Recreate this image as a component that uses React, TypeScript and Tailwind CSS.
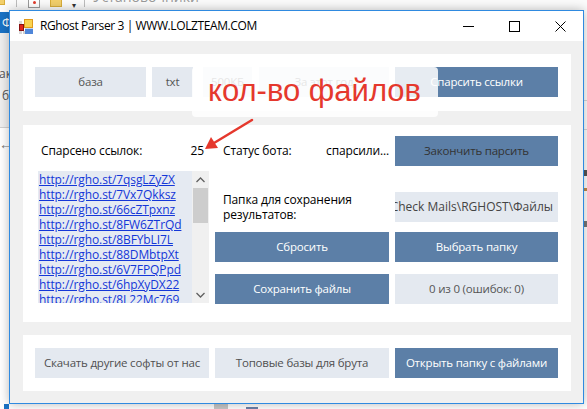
import React from "react";

const links = [
  "http://rgho.st/7qsgLZyZX",
  "http://rgho.st/7Vx7Qkksz",
  "http://rgho.st/66cZTpxnz",
  "http://rgho.st/8FW6ZTrQd",
  "http://rgho.st/8BFYbLI7L",
  "http://rgho.st/88DMbtpXt",
  "http://rgho.st/6V7FPQPpd",
  "http://rgho.st/6hpXyDX22",
  "http://rgho.st/8L22Mc769",
  "http://rgho.st/7kQzP2xLm",
];

function AppIcon() {
  return (
    <svg width="14" height="15" viewBox="0 0 14 15">
      <rect x="0" y="2" width="3" height="3" fill="#d8d8d8" />
      <rect x="0" y="12" width="3" height="3" fill="#d8d8d8" />
      <rect x="4" y="12" width="2" height="3" fill="#d0d0d0" />
      <rect x="0.5" y="5.5" width="4" height="6" fill="#e2251b" stroke="#8a1010" />
      <rect x="5.5" y="0.5" width="8" height="8" fill="#f9d34f" stroke="#e09a1a" />
      <rect x="6" y="10" width="8" height="5" fill="#4f86d9" />
      <rect x="6" y="9" width="8" height="1" fill="#c9d8ee" />
    </svg>
  );
}

function Chevron({ up }: { up?: boolean }) {
  return (
    <svg width="9" height="6" viewBox="0 0 9 6">
      <path
        d={up ? "M0.5 5 L4.5 1 L8.5 5" : "M0.5 1 L4.5 5 L8.5 1"}
        fill="none"
        stroke="#606060"
        strokeWidth="1.3"
      />
    </svg>
  );
}

export default function App() {
  const blue = "bg-[#5c7fa7] text-[11.5px] tracking-[-0.2px]";
  const light = "bg-[#e4e9f0] text-[11.5px] tracking-[-0.2px]";
  return (
    <div className="relative w-[587px] h-[409px] overflow-hidden bg-white font-['Open_Sans',sans-serif] text-[12px]">
      {/* desktop background */}
      <div className="flex flex-col h-full">
        <div className="h-[10px] flex items-start overflow-hidden bg-[#fbfbfb] text-[#9a9a9a]">
          <div className="w-[5px] h-[5px] bg-[#f2cf6b] border-r border-b border-[#d8ad3a]" />
          <div className="ml-[11px] w-px h-[7px] bg-[#bdbdbd]" />
          <div className="ml-[11px] w-[12px] h-[8px] border border-[#9a9a9a] border-t-0 bg-white flex justify-center">
            <div className="w-[3px] h-[3px] rounded-full bg-[#e03a2a] mt-[1px]" />
          </div>
          <div className="ml-[10px] w-[12px] h-[7px] bg-[#f2cf6b] border border-t-0 border-[#d8ad3a]" />
          <div className="ml-[10px] mt-[1px] text-[8px] leading-[8px] text-[#333]">▾</div>
          <div className="ml-[8px] w-px h-[7px] bg-[#bdbdbd]" />
          <div className="ml-[8px] -mt-[11px] text-[14px] leading-[16px] whitespace-nowrap">Установочники</div>
        </div>
        <div className="flex-1 flex">
          <div className="w-[9px] flex flex-col">
            <div className="h-[2px]" />
            <div className="h-[21px] bg-[#1a73c6] text-white text-[12px] leading-[21px] overflow-hidden whitespace-nowrap pl-[2px]">Фа</div>
            <div className="h-[94px] bg-[#efefef] text-[#555] overflow-hidden whitespace-nowrap text-[12px]">
              <div className="mt-[34px] leading-[14px] -ml-[1px]">ак</div>
              <div className="mt-[8px] leading-[14px] pl-[2px]">б</div>
            </div>
            <div className="h-px bg-[#d0d0d0]" />
            <div className="mt-[9px] text-[#777] text-[14px] leading-[14px] overflow-hidden -ml-[1px]">←</div>
            <div className="flex-1" />
            <div className="h-[5px] flex">
              <div className="ml-[4px] w-[5px] bg-[#1a73c6]" />
            </div>
          </div>
          <div className="flex-1 flex flex-col">
            <div className="flex-1" />
            <div className="h-[5px] flex">
              <div className="ml-[205px] w-[14px] bg-[#c6c6c6]" />
              <div className="ml-[18px] w-[12px] h-[2px] mt-[3px] bg-[#6a7fa8]" />
            </div>
          </div>
          <div className="w-[3px] flex flex-col">
            <div className="h-[90px]" />
            <div className="h-px bg-[#d8d8d8]" />
            <div className="h-[28px]" />
            <div className="h-px bg-[#d8d8d8]" />
            <div className="h-[40px]" />
            <div className="h-[6px] bg-[#555]" />
            <div className="h-[12px]" />
            <div className="h-[3px] bg-[#c08a4a]" />
            <div className="h-[30px]" />
            <div className="h-[6px] bg-[#777]" />
          </div>
        </div>
      </div>

      {/* window */}
      <div className="absolute left-[9px] top-[10px] w-[575px] h-[394px] border border-[#2f8ae0] bg-[#f0f0f0] flex flex-col shadow-[0_0_10px_rgba(0,0,0,0.28)]">
        <div className="h-[30px] bg-white flex items-center shrink-0">
          <div className="ml-[9px] mt-[1px]">
            <AppIcon />
          </div>
          <div className="ml-[7px] text-[12px] text-black whitespace-nowrap tracking-[-0.4px]">
            RGhost Parser 3 | WWW.LOLZTEAM.COM
          </div>
          <div className="flex-1" />
          <div className="w-[46px] h-full flex items-center justify-center">
            <div className="w-[11px] h-px bg-black" />
          </div>
          <div className="w-[46px] h-full flex items-center justify-center">
            <div className="w-[11px] h-[11px] border border-black" />
          </div>
          <div className="w-[46px] h-full flex items-center justify-center">
            <svg width="11" height="11" viewBox="0 0 11 11">
              <path d="M0.5 0.5 L10.5 10.5 M10.5 0.5 L0.5 10.5" stroke="#000" strokeWidth="1" />
            </svg>
          </div>
        </div>

        <div className="flex-1 flex flex-col pt-[13px] pl-[13px] pr-[12px]">
          {/* panel 1 */}
          <div className="h-[57px] bg-white pt-[13px] pl-[12px] flex items-start">
            <div className={`w-[111px] h-[30px] ${light} flex items-center justify-center text-[#555]`}>база</div>
            <div className={`ml-[6px] w-[41px] h-[30px] ${light} flex items-center justify-center text-[#555]`}>txt</div>
            <div className={`ml-[10px] w-[49px] h-[30px] ${light} flex items-center justify-center text-[#555]`}>500КБ</div>
            <div className={`ml-[7px] w-[130px] h-[30px] ${light} flex items-center justify-center text-[#555]`}>За этот год</div>
            <div className={`ml-[6px] w-[163px] h-[30px] ${blue} flex items-center justify-center text-white`}>Спарсить ссылки</div>
          </div>

          {/* panel 2 */}
          <div className="mt-[14px] h-[197px] bg-white pt-[11px] pl-[15px] flex items-start gap-[6px]">
            <div className="w-[171px] flex flex-col">
              <div className="h-[30px] flex items-center justify-between pl-[3px] pr-[5px] text-black tracking-[-0.15px]">
                <span>Спарсено ссылок:</span>
                <span>25</span>
              </div>
              <div className="mt-[5px] h-[132px] flex">
                <div className="w-[154px] bg-[#e5eaf2] overflow-hidden pl-[1px] pt-[1px]">
                  {links.map((l) => (
                    <div key={l} className="h-[15px] leading-[15px] text-[#1437d8] underline whitespace-nowrap text-[12px] tracking-[-0.1px]">
                      {l}
                    </div>
                  ))}
                </div>
                <div className="w-[17px] bg-[#f0f0f0] flex flex-col">
                  <div className="h-[17px] flex items-center justify-center">
                    <Chevron up />
                  </div>
                  <div className="flex-1 px-[1px]">
                    <div className="h-[35px] bg-[#cdcdcd]" />
                  </div>
                  <div className="h-[17px] flex items-center justify-center">
                    <Chevron />
                  </div>
                </div>
              </div>
            </div>

            <div className="w-[343px] flex flex-col">
              <div className="h-[30px] flex">
                <div className="w-[174px] flex items-center justify-between pl-[8px] text-black tracking-[-0.15px]">
                  <span>Статус бота:</span>
                  <span>спарсили...</span>
                </div>
                <div className={`ml-[6px] w-[163px] ${blue} flex items-center justify-center text-[#333]`}>Закончить парсить</div>
              </div>
              <div className="mt-[26px] h-[30px] flex">
                <div className="w-[174px] flex flex-col justify-center pl-[8px] text-black leading-[15.5px] tracking-[-0.15px]">
                  <span>Папка для сохранения</span>
                  <span>результатов:</span>
                </div>
                <div className="ml-[6px] w-[163px] bg-[#e4e9f0] text-[12px] flex items-center justify-end overflow-hidden pr-[5px] text-[#444] whitespace-nowrap">
                  <span className="shrink-0">Check Mails\RGHOST\Файлы</span>
                </div>
              </div>
              <div className="mt-[10px] h-[30px] flex">
                <div className={`w-[174px] ${blue} flex items-center justify-center text-white`}>Сбросить</div>
                <div className={`ml-[6px] w-[163px] ${blue} flex items-center justify-center text-white`}>Выбрать папку</div>
              </div>
              <div className="mt-[12px] h-[30px] flex">
                <div className={`w-[174px] ${blue} flex items-center justify-center text-white`}>Сохранить файлы</div>
                <div className={`ml-[6px] w-[163px] ${light} flex items-center justify-center text-[#555]`}>0 из 0 (ошибок: 0)</div>
              </div>
            </div>
          </div>

          {/* panel 3 */}
          <div className="mt-[13px] h-[56px] bg-white pt-[13px] pl-[12px] flex items-start gap-[6px]">
            <div className={`w-[174px] h-[30px] ${light} flex items-center justify-center text-[#505050] whitespace-nowrap`}>Скачать другие софты от нас</div>
            <div className={`w-[174px] h-[30px] ${light} flex items-center justify-center text-[#505050] whitespace-nowrap`}>Топовые базы для брута</div>
            <div className={`w-[163px] h-[30px] ${blue} flex items-center justify-center text-white whitespace-nowrap`}>Открыть папку с файлами</div>
          </div>
        </div>
      </div>

      {/* annotation overlay */}
      <div className="absolute left-[192px] top-[67px] w-[246px] h-[50px] rounded-[4px] bg-white/85 flex items-center pl-[16px]">
        <span className="font-['Liberation_Sans',sans-serif] text-[31px] leading-[32px] text-[#e5382d] whitespace-nowrap -mt-[3px]">
          кол-во файлов
        </span>
      </div>
      <svg className="absolute left-0 top-0" width="587" height="409" viewBox="0 0 587 409">
        <line x1="252" y1="120" x2="214" y2="143" stroke="#e5382d" strokeWidth="2.5" strokeLinecap="round" />
        <path d="M205 149 L211 137 L218 148 Z" fill="#e5382d" />
      </svg>
    </div>
  );
}
